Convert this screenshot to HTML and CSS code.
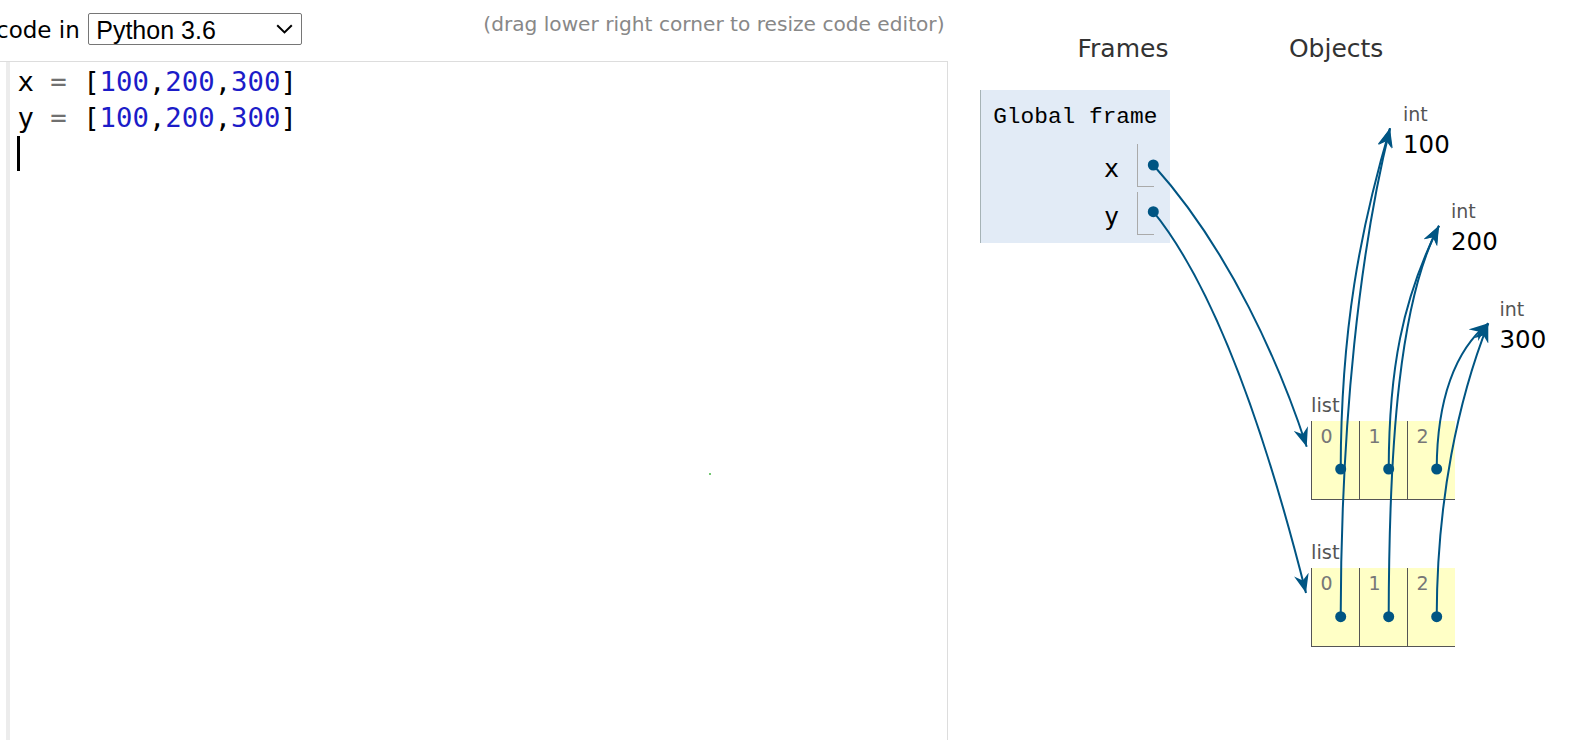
FILE: index.html
```html
<!DOCTYPE html>
<html lang="en">
<head>
<meta charset="utf-8">
<title>Python Tutor</title>
<link rel="stylesheet" href="styles.css">
</head>
<body>
<div class="page">
  <section class="code-pane">
    <div class="toolbar">
      <span class="lang-label">code in</span>
      <div class="select">
        <span class="select-text">Python 3.6</span>
        <svg class="chev" width="17" height="10" viewBox="0 0 17 10"><path d="M1.2 1.2 L8.5 8.4 L15.8 1.2" fill="none" stroke="#000" stroke-width="2"/></svg>
      </div>
      <span class="hint">(drag lower right corner to resize code editor)</span>
    </div>
    <div class="editor">
      <div class="gutter"></div>
      <div class="code">
        <div class="line"><span class="var">x</span> <span class="op">=</span> [<span class="num">100</span>,<span class="num">200</span>,<span class="num">300</span>]</div>
        <div class="line"><span class="var">y</span> <span class="op">=</span> [<span class="num">100</span>,<span class="num">200</span>,<span class="num">300</span>]</div>
        <div class="line"><span class="cursor"></span></div>
      </div>
      <span class="speck"></span>
    </div>
  </section>

  <section class="viz">
    <div class="viz-head">
      <span class="hdr-frames">Frames</span>
      <span class="hdr-objects">Objects</span>
    </div>
    <div class="frame">
      <div class="frame-title">Global frame</div>
      <div class="frame-vars">
        <div class="var-name">x</div><div class="var-val"></div>
        <div class="var-name">y</div><div class="var-val"></div>
      </div>
    </div>

    <div class="int-obj int-a">
      <div class="type-label">int</div>
      <div class="prim-val">100</div>
    </div>
    <div class="int-obj int-b">
      <div class="type-label">int</div>
      <div class="prim-val">200</div>
    </div>
    <div class="int-obj int-c">
      <div class="type-label">int</div>
      <div class="prim-val">300</div>
    </div>

    <div class="list-obj list-a">
      <div class="list-label">list</div>
      <div class="list-tbl">
        <div class="list-cell">0</div>
        <div class="list-cell">1</div>
        <div class="list-cell">2</div>
      </div>
    </div>
    <div class="list-obj list-b">
      <div class="list-label">list</div>
      <div class="list-tbl">
        <div class="list-cell">0</div>
        <div class="list-cell">1</div>
        <div class="list-cell">2</div>
      </div>
    </div>

    <svg class="arrows" width="630" height="740" viewBox="948 0 630 740">
      <defs>
        <marker id="ah" viewBox="0 0 19 15" refX="19" refY="7.5" markerWidth="19" markerHeight="15" markerUnits="userSpaceOnUse" orient="auto">
          <path d="M0,0 L19,7.5 L0,15 L6,7.5 Z" fill="#005583"/>
        </marker>
      </defs>
      <g fill="none" stroke="#005583" stroke-width="2" marker-end="url(#ah)">
        <path d="M1153.3,165 C1230,250 1280,365 1306.7,446.7"/>
        <path d="M1153.3,211.7 C1225,300 1275,470 1306,593"/>
        <path d="M1340.7,469 C1341,330 1360,230 1390,128.3"/>
        <path d="M1340.7,616.7 C1341,420 1360,250 1390,128.3"/>
        <path d="M1388.7,469 C1389,370 1402,300 1439,225.7"/>
        <path d="M1388.7,616.7 C1389,440 1400,300 1439,225.7"/>
        <path d="M1436.7,469 C1437,400 1455,350 1488.3,323.3"/>
        <path d="M1436.7,616.7 C1437,500 1458,400 1488.3,323.3"/>
      </g>
      <g fill="#005583">
        <circle cx="1153.3" cy="165" r="5.5"/>
        <circle cx="1153.3" cy="211.7" r="5.5"/>
        <circle cx="1340.7" cy="469" r="5.5"/>
        <circle cx="1388.7" cy="469" r="5.5"/>
        <circle cx="1436.7" cy="469" r="5.5"/>
        <circle cx="1340.7" cy="616.7" r="5.5"/>
        <circle cx="1388.7" cy="616.7" r="5.5"/>
        <circle cx="1436.7" cy="616.7" r="5.5"/>
      </g>
    </svg>
  </section>
</div>
</body>
</html>
```

FILE: styles.css
```css
html, body {
  margin: 0;
  padding: 0;
  background: #ffffff;
  overflow: hidden;
}

.page {
  display: flex;
  width: 1578px;
  height: 740px;
}

/* ---------- code pane ---------- */
.code-pane {
  width: 948px;
  flex: none;
  display: flex;
  flex-direction: column;
}

.toolbar {
  height: 61px;
  flex: none;
  display: flex;
  align-items: flex-start;
}

.lang-label {
  font-family: "DejaVu Sans", Verdana, sans-serif;
  font-size: 23px;
  line-height: normal;
  color: #000;
  margin-top: 17.3px;
  margin-left: -4px;
  white-space: nowrap;
}

.select {
  margin-top: 13px;
  margin-left: 8px;
  width: 214px;
  height: 32px;
  box-sizing: border-box;
  border: 1px solid #767676;
  border-radius: 2px;
  background: #fff;
  display: flex;
  align-items: center;
  justify-content: space-between;
  padding: 0 8px 0 7.5px;
}

.select-text {
  font-family: "Liberation Sans", Arial, sans-serif;
  font-size: 25px;
  line-height: 30px;
  padding-top: 1px;
  color: #000;
}

.chev {
  display: block;
}

.hint {
  margin-left: auto;
  margin-right: 3.5px;
  margin-top: 11.5px;
  font-family: "DejaVu Sans", Verdana, sans-serif;
  font-size: 20.15px;
  line-height: normal;
  color: #888;
  white-space: nowrap;
}

.editor {
  flex: 1;
  position: relative;
  display: flex;
  border-top: 1px solid #dddddd;
  border-right: 1px solid #dddddd;
  background: #fff;
}

.gutter {
  width: 4px;
  margin-left: 6px;
  background: #ececec;
  flex: none;
}

.code {
  padding-left: 7.4px;
  padding-top: 2.2px;
  font-family: "DejaVu Sans Mono", "Liberation Mono", monospace;
  font-size: 27.3px;
  line-height: 35.7px;
  color: #000;
}

.line {
  white-space: pre;
  height: 35.7px;
}

.var { color: #000; }
.op { color: #707070; }
.num { color: #1c1cc8; }

.cursor {
  display: inline-block;
  width: 2.4px;
  height: 35.7px;
  margin-left: 0;
  background: #000;
  vertical-align: top;
}

.speck {
  position: absolute;
  left: 709px;
  top: 411px;
  width: 2px;
  height: 2px;
  background: #74c874;
}

/* ---------- visualization ---------- */
.viz {
  flex: 1;
  position: relative;
}

.viz-head {
  height: 90px;
  box-sizing: border-box;
  padding-top: 33.5px;
  padding-left: 129.5px;
  display: flex;
  font-family: "DejaVu Sans", Verdana, sans-serif;
  font-size: 25px;
  line-height: 29px;
  color: #333;
}

.hdr-objects {
  margin-left: 120.5px;
}

.frame {
  margin-left: 32px;
  width: 190px;
  height: 153px;
  box-sizing: border-box;
  border-left: 1px solid #a6b3b6;
  background: #e2ebf6;
  padding: 14px 16px 0 12.2px;
}

.frame-title {
  font-family: "Liberation Mono", "DejaVu Sans Mono", monospace;
  font-size: 22.8px;
  line-height: 26px;
  color: #000;
  white-space: nowrap;
}

.frame-vars {
  margin-top: 14px;
  display: grid;
  grid-template-columns: 1fr 17px;
  grid-auto-rows: 43px;
  column-gap: 18px;
  row-gap: 4.5px;
}

.var-name {
  text-align: right;
  font-family: "DejaVu Sans Mono", monospace;
  font-size: 25px;
  line-height: 43px;
  padding-top: 3px;
  color: #000;
}

.var-val {
  border-left: 1px solid #aaaaaa;
  border-bottom: 1px solid #aaaaaa;
}

.int-obj {
  position: absolute;
  font-family: "DejaVu Sans", Verdana, sans-serif;
}

.int-a { left: 455px; top: 102.7px; }
.int-b { left: 503px; top: 200.2px; }
.int-c { left: 551.5px; top: 297.7px; }

.type-label {
  font-size: 19px;
  line-height: 22px;
  color: #555;
}

.prim-val {
  font-size: 24.5px;
  line-height: 29px;
  margin-top: 5px;
  color: #000;
}

.list-obj {
  position: absolute;
  left: 363px;
  font-family: "DejaVu Sans", Verdana, sans-serif;
}

.list-a { top: 395.25px; }
.list-b { top: 542.25px; }

.list-label {
  font-size: 19.5px;
  line-height: 22px;
  color: #555;
}

.list-tbl {
  margin-top: 3.75px;
  display: flex;
}

.list-cell {
  width: 48px;
  height: 79px;
  box-sizing: border-box;
  border-left: 1px solid #555;
  border-bottom: 1px solid #555;
  background: #ffffc6;
  padding: 5px 0 0 8.5px;
  font-size: 19px;
  line-height: 21px;
  color: #777;
}

.arrows {
  position: absolute;
  left: 0;
  top: 0;
  width: 630px;
  height: 740px;
  overflow: visible;
  pointer-events: none;
}
```
